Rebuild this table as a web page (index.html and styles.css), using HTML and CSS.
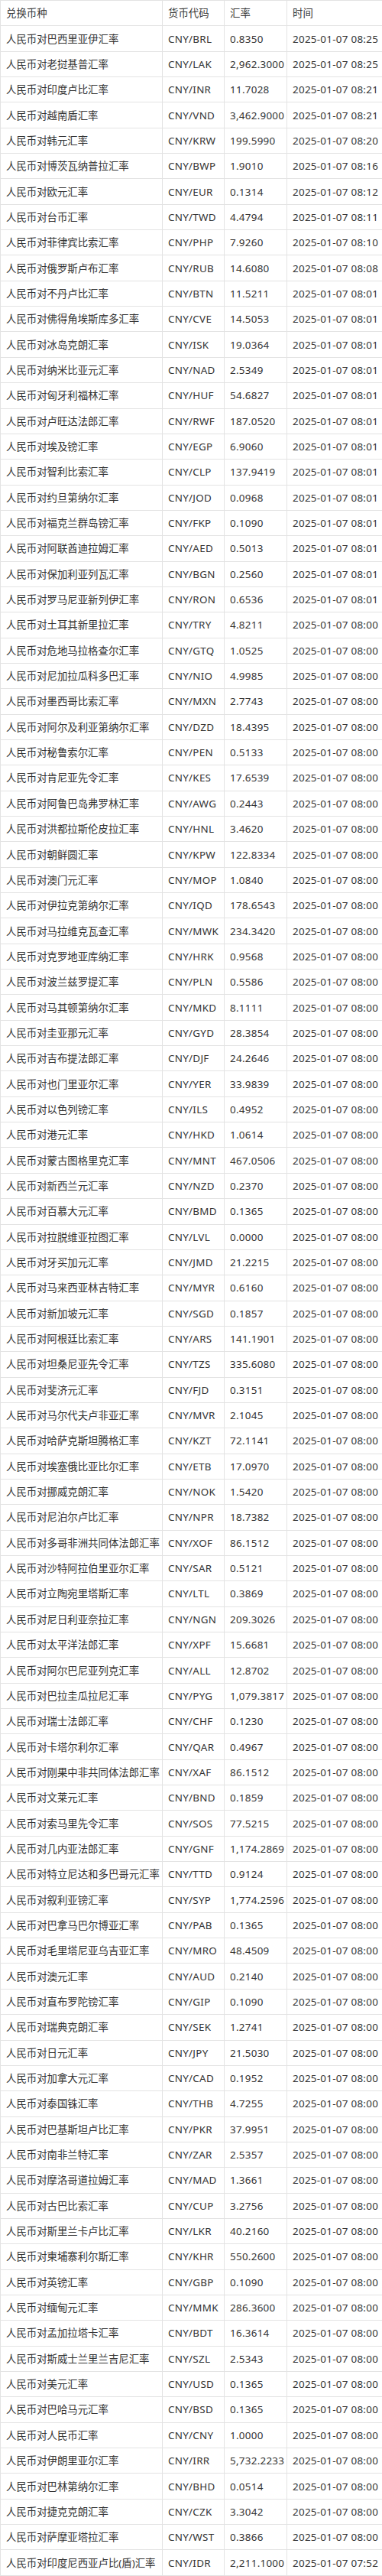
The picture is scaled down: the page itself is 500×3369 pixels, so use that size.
FILE: index.html
```html
<!DOCTYPE html>
<html lang="zh-CN">
<head>
<meta charset="utf-8">
<title>人民币汇率</title>
<link rel="stylesheet" href="styles.css">
</head>
<body>
<table class="rates">
<colgroup><col class="c-name"><col class="c-code"><col class="c-rate"><col class="c-time"></colgroup>
<thead>
<tr><th>兑换币种</th><th>货币代码</th><th>汇率</th><th>时间</th></tr>
</thead>
<tbody>
<tr><td>人民币对巴西里亚伊汇率</td><td>CNY/BRL</td><td>0.8350</td><td>2025-01-07 08:25</td></tr>
<tr><td>人民币对老挝基普汇率</td><td>CNY/LAK</td><td>2,962.3000</td><td>2025-01-07 08:25</td></tr>
<tr><td>人民币对印度卢比汇率</td><td>CNY/INR</td><td>11.7028</td><td>2025-01-07 08:21</td></tr>
<tr><td>人民币对越南盾汇率</td><td>CNY/VND</td><td>3,462.9000</td><td>2025-01-07 08:21</td></tr>
<tr><td>人民币对韩元汇率</td><td>CNY/KRW</td><td>199.5990</td><td>2025-01-07 08:20</td></tr>
<tr><td>人民币对博茨瓦纳普拉汇率</td><td>CNY/BWP</td><td>1.9010</td><td>2025-01-07 08:16</td></tr>
<tr><td>人民币对欧元汇率</td><td>CNY/EUR</td><td>0.1314</td><td>2025-01-07 08:12</td></tr>
<tr><td>人民币对台币汇率</td><td>CNY/TWD</td><td>4.4794</td><td>2025-01-07 08:11</td></tr>
<tr><td>人民币对菲律宾比索汇率</td><td>CNY/PHP</td><td>7.9260</td><td>2025-01-07 08:10</td></tr>
<tr><td>人民币对俄罗斯卢布汇率</td><td>CNY/RUB</td><td>14.6080</td><td>2025-01-07 08:08</td></tr>
<tr><td>人民币对不丹卢比汇率</td><td>CNY/BTN</td><td>11.5211</td><td>2025-01-07 08:01</td></tr>
<tr><td>人民币对佛得角埃斯库多汇率</td><td>CNY/CVE</td><td>14.5053</td><td>2025-01-07 08:01</td></tr>
<tr><td>人民币对冰岛克朗汇率</td><td>CNY/ISK</td><td>19.0364</td><td>2025-01-07 08:01</td></tr>
<tr><td>人民币对纳米比亚元汇率</td><td>CNY/NAD</td><td>2.5349</td><td>2025-01-07 08:01</td></tr>
<tr><td>人民币对匈牙利福林汇率</td><td>CNY/HUF</td><td>54.6827</td><td>2025-01-07 08:01</td></tr>
<tr><td>人民币对卢旺达法郎汇率</td><td>CNY/RWF</td><td>187.0520</td><td>2025-01-07 08:01</td></tr>
<tr><td>人民币对埃及镑汇率</td><td>CNY/EGP</td><td>6.9060</td><td>2025-01-07 08:01</td></tr>
<tr><td>人民币对智利比索汇率</td><td>CNY/CLP</td><td>137.9419</td><td>2025-01-07 08:01</td></tr>
<tr><td>人民币对约旦第纳尔汇率</td><td>CNY/JOD</td><td>0.0968</td><td>2025-01-07 08:01</td></tr>
<tr><td>人民币对福克兰群岛镑汇率</td><td>CNY/FKP</td><td>0.1090</td><td>2025-01-07 08:01</td></tr>
<tr><td>人民币对阿联酋迪拉姆汇率</td><td>CNY/AED</td><td>0.5013</td><td>2025-01-07 08:01</td></tr>
<tr><td>人民币对保加利亚列瓦汇率</td><td>CNY/BGN</td><td>0.2560</td><td>2025-01-07 08:01</td></tr>
<tr><td>人民币对罗马尼亚新列伊汇率</td><td>CNY/RON</td><td>0.6536</td><td>2025-01-07 08:01</td></tr>
<tr><td>人民币对土耳其新里拉汇率</td><td>CNY/TRY</td><td>4.8211</td><td>2025-01-07 08:00</td></tr>
<tr><td>人民币对危地马拉格查尔汇率</td><td>CNY/GTQ</td><td>1.0525</td><td>2025-01-07 08:00</td></tr>
<tr><td>人民币对尼加拉瓜科多巴汇率</td><td>CNY/NIO</td><td>4.9985</td><td>2025-01-07 08:00</td></tr>
<tr><td>人民币对墨西哥比索汇率</td><td>CNY/MXN</td><td>2.7743</td><td>2025-01-07 08:00</td></tr>
<tr><td>人民币对阿尔及利亚第纳尔汇率</td><td>CNY/DZD</td><td>18.4395</td><td>2025-01-07 08:00</td></tr>
<tr><td>人民币对秘鲁索尔汇率</td><td>CNY/PEN</td><td>0.5133</td><td>2025-01-07 08:00</td></tr>
<tr><td>人民币对肯尼亚先令汇率</td><td>CNY/KES</td><td>17.6539</td><td>2025-01-07 08:00</td></tr>
<tr><td>人民币对阿鲁巴岛弗罗林汇率</td><td>CNY/AWG</td><td>0.2443</td><td>2025-01-07 08:00</td></tr>
<tr><td>人民币对洪都拉斯伦皮拉汇率</td><td>CNY/HNL</td><td>3.4620</td><td>2025-01-07 08:00</td></tr>
<tr><td>人民币对朝鲜圆汇率</td><td>CNY/KPW</td><td>122.8334</td><td>2025-01-07 08:00</td></tr>
<tr><td>人民币对澳门元汇率</td><td>CNY/MOP</td><td>1.0840</td><td>2025-01-07 08:00</td></tr>
<tr><td>人民币对伊拉克第纳尔汇率</td><td>CNY/IQD</td><td>178.6543</td><td>2025-01-07 08:00</td></tr>
<tr><td>人民币对马拉维克瓦查汇率</td><td>CNY/MWK</td><td>234.3420</td><td>2025-01-07 08:00</td></tr>
<tr><td>人民币对克罗地亚库纳汇率</td><td>CNY/HRK</td><td>0.9568</td><td>2025-01-07 08:00</td></tr>
<tr><td>人民币对波兰兹罗提汇率</td><td>CNY/PLN</td><td>0.5586</td><td>2025-01-07 08:00</td></tr>
<tr><td>人民币对马其顿第纳尔汇率</td><td>CNY/MKD</td><td>8.1111</td><td>2025-01-07 08:00</td></tr>
<tr><td>人民币对圭亚那元汇率</td><td>CNY/GYD</td><td>28.3854</td><td>2025-01-07 08:00</td></tr>
<tr><td>人民币对吉布提法郎汇率</td><td>CNY/DJF</td><td>24.2646</td><td>2025-01-07 08:00</td></tr>
<tr><td>人民币对也门里亚尔汇率</td><td>CNY/YER</td><td>33.9839</td><td>2025-01-07 08:00</td></tr>
<tr><td>人民币对以色列镑汇率</td><td>CNY/ILS</td><td>0.4952</td><td>2025-01-07 08:00</td></tr>
<tr><td>人民币对港元汇率</td><td>CNY/HKD</td><td>1.0614</td><td>2025-01-07 08:00</td></tr>
<tr><td>人民币对蒙古图格里克汇率</td><td>CNY/MNT</td><td>467.0506</td><td>2025-01-07 08:00</td></tr>
<tr><td>人民币对新西兰元汇率</td><td>CNY/NZD</td><td>0.2370</td><td>2025-01-07 08:00</td></tr>
<tr><td>人民币对百慕大元汇率</td><td>CNY/BMD</td><td>0.1365</td><td>2025-01-07 08:00</td></tr>
<tr><td>人民币对拉脱维亚拉图汇率</td><td>CNY/LVL</td><td>0.0000</td><td>2025-01-07 08:00</td></tr>
<tr><td>人民币对牙买加元汇率</td><td>CNY/JMD</td><td>21.2215</td><td>2025-01-07 08:00</td></tr>
<tr><td>人民币对马来西亚林吉特汇率</td><td>CNY/MYR</td><td>0.6160</td><td>2025-01-07 08:00</td></tr>
<tr><td>人民币对新加坡元汇率</td><td>CNY/SGD</td><td>0.1857</td><td>2025-01-07 08:00</td></tr>
<tr><td>人民币对阿根廷比索汇率</td><td>CNY/ARS</td><td>141.1901</td><td>2025-01-07 08:00</td></tr>
<tr><td>人民币对坦桑尼亚先令汇率</td><td>CNY/TZS</td><td>335.6080</td><td>2025-01-07 08:00</td></tr>
<tr><td>人民币对斐济元汇率</td><td>CNY/FJD</td><td>0.3151</td><td>2025-01-07 08:00</td></tr>
<tr><td>人民币对马尔代夫卢非亚汇率</td><td>CNY/MVR</td><td>2.1045</td><td>2025-01-07 08:00</td></tr>
<tr><td>人民币对哈萨克斯坦腾格汇率</td><td>CNY/KZT</td><td>72.1141</td><td>2025-01-07 08:00</td></tr>
<tr><td>人民币对埃塞俄比亚比尔汇率</td><td>CNY/ETB</td><td>17.0970</td><td>2025-01-07 08:00</td></tr>
<tr><td>人民币对挪威克朗汇率</td><td>CNY/NOK</td><td>1.5420</td><td>2025-01-07 08:00</td></tr>
<tr><td>人民币对尼泊尔卢比汇率</td><td>CNY/NPR</td><td>18.7382</td><td>2025-01-07 08:00</td></tr>
<tr><td>人民币对多哥非洲共同体法郎汇率</td><td>CNY/XOF</td><td>86.1512</td><td>2025-01-07 08:00</td></tr>
<tr><td>人民币对沙特阿拉伯里亚尔汇率</td><td>CNY/SAR</td><td>0.5121</td><td>2025-01-07 08:00</td></tr>
<tr><td>人民币对立陶宛里塔斯汇率</td><td>CNY/LTL</td><td>0.3869</td><td>2025-01-07 08:00</td></tr>
<tr><td>人民币对尼日利亚奈拉汇率</td><td>CNY/NGN</td><td>209.3026</td><td>2025-01-07 08:00</td></tr>
<tr><td>人民币对太平洋法郎汇率</td><td>CNY/XPF</td><td>15.6681</td><td>2025-01-07 08:00</td></tr>
<tr><td>人民币对阿尔巴尼亚列克汇率</td><td>CNY/ALL</td><td>12.8702</td><td>2025-01-07 08:00</td></tr>
<tr><td>人民币对巴拉圭瓜拉尼汇率</td><td>CNY/PYG</td><td>1,079.3817</td><td>2025-01-07 08:00</td></tr>
<tr><td>人民币对瑞士法郎汇率</td><td>CNY/CHF</td><td>0.1230</td><td>2025-01-07 08:00</td></tr>
<tr><td>人民币对卡塔尔利尔汇率</td><td>CNY/QAR</td><td>0.4967</td><td>2025-01-07 08:00</td></tr>
<tr><td>人民币对刚果中非共同体法郎汇率</td><td>CNY/XAF</td><td>86.1512</td><td>2025-01-07 08:00</td></tr>
<tr><td>人民币对文莱元汇率</td><td>CNY/BND</td><td>0.1859</td><td>2025-01-07 08:00</td></tr>
<tr><td>人民币对索马里先令汇率</td><td>CNY/SOS</td><td>77.5215</td><td>2025-01-07 08:00</td></tr>
<tr><td>人民币对几内亚法郎汇率</td><td>CNY/GNF</td><td>1,174.2869</td><td>2025-01-07 08:00</td></tr>
<tr><td>人民币对特立尼达和多巴哥元汇率</td><td>CNY/TTD</td><td>0.9124</td><td>2025-01-07 08:00</td></tr>
<tr><td>人民币对叙利亚镑汇率</td><td>CNY/SYP</td><td>1,774.2596</td><td>2025-01-07 08:00</td></tr>
<tr><td>人民币对巴拿马巴尔博亚汇率</td><td>CNY/PAB</td><td>0.1365</td><td>2025-01-07 08:00</td></tr>
<tr><td>人民币对毛里塔尼亚乌吉亚汇率</td><td>CNY/MRO</td><td>48.4509</td><td>2025-01-07 08:00</td></tr>
<tr><td>人民币对澳元汇率</td><td>CNY/AUD</td><td>0.2140</td><td>2025-01-07 08:00</td></tr>
<tr><td>人民币对直布罗陀镑汇率</td><td>CNY/GIP</td><td>0.1090</td><td>2025-01-07 08:00</td></tr>
<tr><td>人民币对瑞典克朗汇率</td><td>CNY/SEK</td><td>1.2741</td><td>2025-01-07 08:00</td></tr>
<tr><td>人民币对日元汇率</td><td>CNY/JPY</td><td>21.5030</td><td>2025-01-07 08:00</td></tr>
<tr><td>人民币对加拿大元汇率</td><td>CNY/CAD</td><td>0.1952</td><td>2025-01-07 08:00</td></tr>
<tr><td>人民币对泰国铢汇率</td><td>CNY/THB</td><td>4.7255</td><td>2025-01-07 08:00</td></tr>
<tr><td>人民币对巴基斯坦卢比汇率</td><td>CNY/PKR</td><td>37.9951</td><td>2025-01-07 08:00</td></tr>
<tr><td>人民币对南非兰特汇率</td><td>CNY/ZAR</td><td>2.5357</td><td>2025-01-07 08:00</td></tr>
<tr><td>人民币对摩洛哥道拉姆汇率</td><td>CNY/MAD</td><td>1.3661</td><td>2025-01-07 08:00</td></tr>
<tr><td>人民币对古巴比索汇率</td><td>CNY/CUP</td><td>3.2756</td><td>2025-01-07 08:00</td></tr>
<tr><td>人民币对斯里兰卡卢比汇率</td><td>CNY/LKR</td><td>40.2160</td><td>2025-01-07 08:00</td></tr>
<tr><td>人民币对柬埔寨利尔斯汇率</td><td>CNY/KHR</td><td>550.2600</td><td>2025-01-07 08:00</td></tr>
<tr><td>人民币对英镑汇率</td><td>CNY/GBP</td><td>0.1090</td><td>2025-01-07 08:00</td></tr>
<tr><td>人民币对缅甸元汇率</td><td>CNY/MMK</td><td>286.3600</td><td>2025-01-07 08:00</td></tr>
<tr><td>人民币对孟加拉塔卡汇率</td><td>CNY/BDT</td><td>16.3614</td><td>2025-01-07 08:00</td></tr>
<tr><td>人民币对斯威士兰里兰吉尼汇率</td><td>CNY/SZL</td><td>2.5343</td><td>2025-01-07 08:00</td></tr>
<tr><td>人民币对美元汇率</td><td>CNY/USD</td><td>0.1365</td><td>2025-01-07 08:00</td></tr>
<tr><td>人民币对巴哈马元汇率</td><td>CNY/BSD</td><td>0.1365</td><td>2025-01-07 08:00</td></tr>
<tr><td>人民币对人民币汇率</td><td>CNY/CNY</td><td>1.0000</td><td>2025-01-07 08:00</td></tr>
<tr><td>人民币对伊朗里亚尔汇率</td><td>CNY/IRR</td><td>5,732.2233</td><td>2025-01-07 08:00</td></tr>
<tr><td>人民币对巴林第纳尔汇率</td><td>CNY/BHD</td><td>0.0514</td><td>2025-01-07 08:00</td></tr>
<tr><td>人民币对捷克克朗汇率</td><td>CNY/CZK</td><td>3.3042</td><td>2025-01-07 08:00</td></tr>
<tr><td>人民币对萨摩亚塔拉汇率</td><td>CNY/WST</td><td>0.3866</td><td>2025-01-07 08:00</td></tr>
<tr><td>人民币对印度尼西亚卢比(盾)汇率</td><td>CNY/IDR</td><td>2,211.1000</td><td>2025-01-07 07:52</td></tr>
</tbody>
</table>
</body>
</html>
```

FILE: styles.css
```css
html, body {
  margin: 0;
  padding: 0;
  background: #ffffff;
}

body {
  font-family: "Noto Sans", "Noto Sans CJK SC", sans-serif;
  font-size: 13.4px;
  color: #333333;
}

.rates {
  width: 500px;
  table-layout: fixed;
  border-collapse: collapse;
  border-spacing: 0;
}

.c-name { width: 212px; }
.c-code { width: 81px; }
.c-rate { width: 82px; }
.c-time { width: 125px; }

.rates th,
.rates td {
  height: 33.356px;
  box-sizing: border-box;
  padding: 0 0 0 7px;
  border: 1px solid #e3e3e3;
  text-align: left;
  vertical-align: middle;
  white-space: nowrap;
  overflow: hidden;
  font-weight: normal;
  line-height: 18px;
}

.rates td + td {
  letter-spacing: 0.28px;
}

.rates th {
  color: #3a3a3a;
}
```
